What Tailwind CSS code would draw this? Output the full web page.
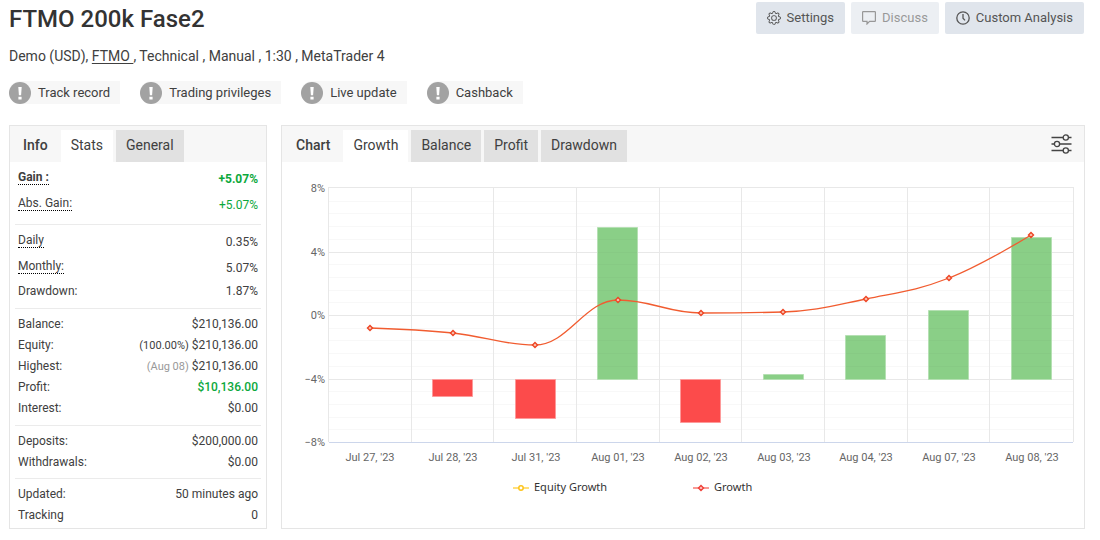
<!DOCTYPE html>
<html lang="en">
<head>
<meta charset="utf-8">
<meta name="viewport" content="width=device-width, initial-scale=1">
<title>FTMO 200k Fase2</title>
<script src="https://cdn.jsdelivr.net/npm/@tailwindcss/browser@4"></script>
</head>
<body class="bg-white pl-[9px] pr-[15px] font-[Roboto,sans-serif] text-[#404040]">
<header class="flex items-start justify-between pt-0.5 pr-px">
  <h1 class="text-2xl leading-[34px] font-medium text-[#333]">FTMO 200k Fase2</h1>
  <div class="flex gap-1.5 text-[13px] text-[#555]">
    <button type="button" class="flex h-8 items-center gap-1.5 rounded-xs bg-[#e0e5ec] px-[11px]">
      <svg class="size-3.5" viewBox="0 0 16 16" fill="currentColor" aria-hidden="true"><path d="M8 4.754a3.246 3.246 0 1 0 0 6.492 3.246 3.246 0 0 0 0-6.492zM5.754 8a2.246 2.246 0 1 1 4.492 0 2.246 2.246 0 0 1-4.492 0z"/><path d="M9.796 1.343c-.527-1.79-3.065-1.79-3.592 0l-.094.319a.873.873 0 0 1-1.255.52l-.292-.16c-1.64-.892-3.433.902-2.54 2.541l.159.292a.873.873 0 0 1-.52 1.255l-.319.094c-1.79.527-1.79 3.065 0 3.592l.319.094a.873.873 0 0 1 .52 1.255l-.16.292c-.892 1.64.901 3.434 2.541 2.54l.292-.159a.873.873 0 0 1 1.255.52l.094.319c.527 1.79 3.065 1.79 3.592 0l.094-.319a.873.873 0 0 1 1.255-.52l.292.16c1.64.893 3.434-.902 2.54-2.541l-.159-.292a.873.873 0 0 1 .52-1.255l.319-.094c1.79-.527 1.79-3.065 0-3.592l-.319-.094a.873.873 0 0 1-.52-1.255l.16-.292c.893-1.64-.902-3.433-2.541-2.54l-.292.159a.873.873 0 0 1-1.255-.52l-.094-.319zm-2.633.283c.246-.835 1.428-.835 1.674 0l.094.319a1.873 1.873 0 0 0 2.693 1.115l.291-.16c.764-.415 1.6.42 1.184 1.185l-.159.292a1.873 1.873 0 0 0 1.116 2.692l.318.094c.835.246.835 1.428 0 1.674l-.319.094a1.873 1.873 0 0 0-1.115 2.693l.16.291c.415.764-.42 1.6-1.185 1.184l-.291-.159a1.873 1.873 0 0 0-2.693 1.116l-.094.318c-.246.835-1.428.835-1.674 0l-.094-.319a1.873 1.873 0 0 0-2.692-1.115l-.292.16c-.764.415-1.6-.42-1.184-1.185l.159-.291A1.873 1.873 0 0 0 1.945 8.93l-.319-.094c-.835-.246-.835-1.428 0-1.674l.319-.094A1.873 1.873 0 0 0 3.06 4.377l-.16-.292c-.415-.764.42-1.6 1.185-1.184l.292.159a1.873 1.873 0 0 0 2.692-1.115l.094-.319z"/></svg>
      Settings
    </button>
    <button type="button" disabled class="flex h-8 items-center gap-1.5 rounded-xs bg-[#e0e5ec] px-[11px] opacity-60">
      <svg class="size-3.5" viewBox="0 0 14 14" fill="none" stroke="currentColor" stroke-width="1.2" aria-hidden="true"><path d="M1.2.6h11.6a.6.6 0 0 1 .6.6v8.6a.6.6 0 0 1-.6.6H7.6L5 13v-2.6H1.2a.6.6 0 0 1-.6-.6V1.2a.6.6 0 0 1 .6-.6z"/></svg>
      Discuss
    </button>
    <button type="button" class="flex h-8 items-center gap-1.5 rounded-xs bg-[#e0e5ec] px-[11px]">
      <svg class="size-3.5" viewBox="0 0 14 14" fill="none" stroke="currentColor" stroke-width="1.3" aria-hidden="true"><circle cx="7" cy="7" r="6.2"/><path d="M7 3v4.2l2 2.2"/></svg>
      Custom Analysis
    </button>
  </div>
</header>

<p class="mt-2.5 text-sm leading-5">Demo (USD), <a href="#ftmo" class="whitespace-pre underline underline-offset-2">FTMO </a>, Technical , Manual , 1:30 , MetaTrader 4</p>

<ul class="mt-[15px] flex flex-wrap gap-5 text-[13px] leading-[23px]">
  <li class="flex items-center gap-[7px] rounded-l-full rounded-r-xs bg-[#f7f7f7] pr-2.5">
    <svg class="size-[22px]" viewBox="0 0 22 22" aria-hidden="true"><circle cx="11" cy="11" r="11" fill="#a2a2a2"/><path d="M9.3 5h3.4l-.6 8.2H9.9zM9.4 14.8h3.2v2.6H9.4z" fill="#fff"/></svg>Track record</li>
  <li class="flex items-center gap-[7px] rounded-l-full rounded-r-xs bg-[#f7f7f7] pr-2.5">
    <svg class="size-[22px]" viewBox="0 0 22 22" aria-hidden="true"><circle cx="11" cy="11" r="11" fill="#a2a2a2"/><path d="M9.3 5h3.4l-.6 8.2H9.9zM9.4 14.8h3.2v2.6H9.4z" fill="#fff"/></svg>Trading privileges</li>
  <li class="flex items-center gap-[7px] rounded-l-full rounded-r-xs bg-[#f7f7f7] pr-2.5">
    <svg class="size-[22px]" viewBox="0 0 22 22" aria-hidden="true"><circle cx="11" cy="11" r="11" fill="#a2a2a2"/><path d="M9.3 5h3.4l-.6 8.2H9.9zM9.4 14.8h3.2v2.6H9.4z" fill="#fff"/></svg>Live update</li>
  <li class="flex items-center gap-[7px] rounded-l-full rounded-r-xs bg-[#f7f7f7] pr-2.5">
    <svg class="size-[22px]" viewBox="0 0 22 22" aria-hidden="true"><circle cx="11" cy="11" r="11" fill="#a2a2a2"/><path d="M9.3 5h3.4l-.6 8.2H9.9zM9.4 14.8h3.2v2.6H9.4z" fill="#fff"/></svg>Cashback</li>
</ul>

<main class="mt-[21px] grid grid-cols-[258px_1fr] items-start gap-3.5">
  <section class="border border-[#e5e5e5]">
    <div class="flex items-end gap-[3px] bg-[#f7f7f7] pt-1 pl-[13px] text-sm">
      <h2 class="h-8 pr-2.5 leading-[30px] font-medium">Info</h2>
      <button type="button" class="h-8 bg-white px-2.5 pb-0.5">Stats</button>
      <button type="button" class="h-8 bg-[#e1e1e1] px-2.5 pb-0.5">General</button>
    </div>
    <div class="divide-y divide-[#ebebeb] px-[5px] pb-0.5 text-xs">
      <dl class="px-[3px] pt-0.5 pb-2">
        <div class="flex h-[26px] items-center justify-between font-bold"><dt class="border-b border-dotted border-black leading-[14px]">Gain :</dt><dd class="mt-1 text-[#0ca83c]">+5.07%</dd></div>
        <div class="flex h-[26px] items-center justify-between"><dt class="border-b border-dotted border-black leading-[14px]">Abs. Gain:</dt><dd class="mt-1 text-[#0ca83c]">+5.07%</dd></div>
      </dl>
      <dl class="px-[3px] pt-0.5 pb-1.5">
        <div class="flex h-[26px] items-center justify-between"><dt class="border-b border-dotted border-black leading-[14px]">Daily</dt><dd class="mt-1">0.35%</dd></div>
        <div class="flex h-[26px] items-center justify-between"><dt class="border-b border-dotted border-black leading-[14px]">Monthly:</dt><dd class="mt-1">5.07%</dd></div>
        <div class="flex justify-between pt-0.5 leading-[21px]"><dt>Drawdown:</dt><dd>1.87%</dd></div>
      </dl>
      <dl class="px-[3px] pt-[5px] pb-1.5 leading-[21px]">
        <div class="flex justify-between"><dt>Balance:</dt><dd>$210,136.00</dd></div>
        <div class="flex justify-between"><dt>Equity:</dt><dd><span class="text-[11px]">(100.00%)</span> $210,136.00</dd></div>
        <div class="flex justify-between"><dt>Highest:</dt><dd><span class="text-[11px] text-[#999]">(Aug 08)</span> $210,136.00</dd></div>
        <div class="flex justify-between"><dt>Profit:</dt><dd class="font-medium text-[#0ca83c]">$10,136.00</dd></div>
        <div class="flex justify-between"><dt>Interest:</dt><dd>$0.00</dd></div>
      </dl>
      <dl class="px-[3px] py-[5px] leading-[21px]">
        <div class="flex justify-between"><dt>Deposits:</dt><dd>$200,000.00</dd></div>
        <div class="flex justify-between"><dt>Withdrawals:</dt><dd>$0.00</dd></div>
      </dl>
      <dl class="px-[3px] pt-[5px] leading-[21px]">
        <div class="flex justify-between"><dt>Updated:</dt><dd>50 minutes ago</dd></div>
        <div class="flex justify-between"><dt>Tracking</dt><dd>0</dd></div>
      </dl>
    </div>
  </section>

  <section class="border border-[#e5e5e5]">
    <div class="flex items-end gap-[3px] bg-[#f7f7f7] pt-1 pr-3 pl-3.5 text-sm">
      <h2 class="h-8 pr-2.5 leading-[30px] font-medium">Chart</h2>
      <button type="button" class="h-8 bg-white px-2.5 pb-0.5">Growth</button>
      <button type="button" class="h-8 bg-[#e1e1e1] px-2.5 pb-0.5">Balance</button>
      <button type="button" class="h-8 bg-[#e1e1e1] px-2.5 pb-0.5">Profit</button>
      <button type="button" class="h-8 bg-[#e1e1e1] px-2.5 pb-0.5">Drawdown</button>
      <button type="button" aria-label="Chart options" class="ml-auto flex h-8 items-center pb-1">
        <svg class="h-5 w-[21px]" viewBox="0 0 21 20" fill="none" stroke="#444" stroke-width="1.3" aria-hidden="true"><path d="M.5 3.500h11.600M17.600 3.500h2.900M.5 10h2.900M8.600 10h11.900M.5 16.500h11.600M17.600 16.500h2.900"/><circle cx="14.800" cy="3.500" r="2.600"/><circle cx="6" cy="10" r="2.600"/><circle cx="14.800" cy="16.500" r="2.600"/></svg>
      </button>
    </div>
    <svg class="block h-auto w-full" viewBox="282 162 802 366" role="img" aria-label="Growth chart">
      <!-- minor grid -->
      <path stroke="#f8f8f8" fill="none" d="M328 201.500H1073M328 213.500H1073M328 226.500H1073M328 239.500H1073M328 264.500H1073M328 277.500H1073M328 290.500H1073M328 302.500H1073M328 328.500H1073M328 340.500H1073M328 353.500H1073M328 366.500H1073M328 391.500H1073M328 404.500H1073M328 417.500H1073M328 429.500H1073"/>
      <!-- major grid -->
      <path stroke="#e8e8e8" fill="none" d="M328 187.500H1074M328 252.500H1073M328 315.500H1073M328 379.500H1073M328.500 187V442M411.500 187V442M493.500 187V442M576.500 187V442M659.500 187V442M741.500 187V442M824.500 187V442M907.500 187V442M989.500 187V442M1073.500 187V442"/>
      <path stroke="#ccd6eb" d="M329 442.500H1073"/>
      <!-- daily change -->
      <g fill="#8acf87" stroke="#b5e0b3">
        <path d="M597.500 227.500h40v152h-40zM763.500 374.500h40v5h-40zM845.500 335.500h40v44h-40zM928.500 310.500h40v69h-40zM1011.500 237.500h40v142h-40z"/>
      </g>
      <g fill="#fc4b4b" stroke="#fd9a9a">
        <path d="M432.500 379.500h40v17h-40zM515.500 379.500h40v39h-40zM680.500 379.500h40v43h-40z"/>
      </g>
      <path stroke="#000" stroke-opacity=".02" fill="none" d="M598 239.500h39M598 252.500h39M598 264.500h39M598 277.500h39M598 290.500h39M598 302.500h39M598 315.500h39M598 328.500h39M598 340.500h39M598 353.500h39M598 366.500h39M846 340.500h39M846 353.500h39M846 366.500h39M929 315.500h39M929 328.500h39M929 340.500h39M929 353.500h39M929 366.500h39M1012 239.500h39M1012 252.500h39M1012 264.500h39M1012 277.500h39M1012 290.500h39M1012 302.500h39M1012 315.500h39M1012 328.500h39M1012 340.500h39M1012 353.500h39M1012 366.500h39"/>
      <!-- growth line -->
      <path fill="none" stroke="#f15c30" stroke-width="1.300" d="M370 328C370 328 419.800 329.600 453 333C485.800 336.400 502.200 345 535 345C568.200 345 584.800 300 618 300C651.200 300 667.800 313 701 313C733.800 313 750.200 313 783 312C816.200 311 832.800 305.800 866 299C899.200 292.200 915.800 290.900 949 278C981.800 265.300 1031 235 1031 235"/>
      <g fill="#f8c4b4" stroke="#ee4423" stroke-width="1.400">
        <path d="M370 325.500l2.500 2.500-2.500 2.500-2.500-2.500zM453 330.500l2.500 2.500-2.500 2.500-2.500-2.500zM535 342.500l2.500 2.500-2.500 2.500-2.500-2.500zM618 297.500l2.500 2.500-2.500 2.500-2.500-2.500zM701 310.500l2.500 2.500-2.500 2.500-2.500-2.500zM783 309.500l2.500 2.500-2.500 2.500-2.500-2.500zM866 296.500l2.500 2.500-2.500 2.500-2.500-2.500zM949 275.500l2.500 2.500-2.500 2.500-2.500-2.500zM1031 232.500l2.500 2.500-2.500 2.500-2.500-2.500z"/>
      </g>
      <g font-size="11" fill="#666" text-anchor="end">
        <text x="325" y="192">8%</text><text x="325" y="256">4%</text><text x="325" y="319">0%</text><text x="325" y="383">−4%</text><text x="325" y="446">−8%</text>
      </g>
      <g font-size="11" fill="#666" text-anchor="middle">
        <text x="370" y="461">Jul 27, '23</text><text x="453" y="461">Jul 28, '23</text><text x="536" y="461">Jul 31, '23</text><text x="618" y="461">Aug 01, '23</text><text x="701" y="461">Aug 02, '23</text><text x="784" y="461">Aug 03, '23</text><text x="866" y="461">Aug 04, '23</text><text x="949" y="461">Aug 07, '23</text><text x="1032" y="461">Aug 08, '23</text>
      </g>
      <path stroke="#ffdf7a" stroke-width="2" d="M513 488h16"/>
      <circle cx="521" cy="488" r="2.200" fill="#fff" stroke="#fdc41a" stroke-width="1.500"/>
      <path stroke="#f99a94" stroke-width="2" d="M693 488h16"/>
      <path d="M701 485.500l2.500 2.500-2.500 2.500-2.500-2.500z" fill="#fbc8c4" stroke="#ef3e36" stroke-width="1.400"/>
      <g font-family="'Noto Sans', sans-serif" font-size="11" fill="#333">
        <text x="534" y="491">Equity Growth</text><text x="714" y="491">Growth</text>
      </g>
    </svg>
  </section>
</main>
</body>
</html>
